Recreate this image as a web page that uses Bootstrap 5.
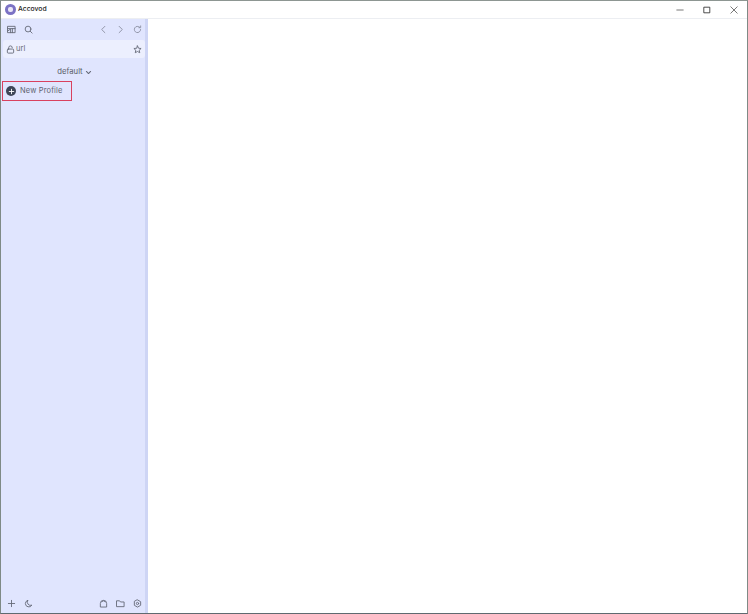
<!DOCTYPE html>
<html lang="en">
<head>
<meta charset="utf-8">
<title>Accovod</title>
<link href="https://cdn.jsdelivr.net/npm/bootstrap@5.3.0/dist/css/bootstrap.min.css" rel="stylesheet">
<style>
html,body{height:100%;margin:0;overflow:hidden;background:#fff}
.win-frame{width:748px;height:614px;border:1px solid #7f8a86;border-top-color:#8d9692;border-bottom-color:#5f6a70;font-family:"Inter","Liberation Sans",sans-serif;color:#50535f}
.title-bar{height:18px;flex:none;font-size:6.8px;font-weight:500;color:#222;border-bottom:1px solid #eceef2}
.app-logo{width:11px;height:11px;border-radius:50%;background:#7b72c4;margin-left:4px;margin-right:2px}
.app-logo::after{content:"";width:5px;height:5px;background:#e9e7f7;border-radius:2px}
.win-btn{width:27px;height:17px}
.win-btn .ico{width:8px;height:8px}
.side-pane{width:147px;background:#e0e5fe;border-right:3px solid #ced5f5;font-size:7.5px}
.tool-row{height:20px;flex:none;padding:0 3px 0 6px}
.url-row{height:18px;flex:none;margin:1px 0 0 2px;padding:0 3px 0 3px;background:#eceffe;border-radius:3px;color:#6a6d78}
.group-label{margin-top:8px;padding-left:3px;height:12px;flex:none;font-size:7.7px;color:#5a5e6a;gap:2px}
.profile-box{margin:3px 0 0 1px;width:70px;height:20px;flex:none;border:1px solid #d9415f;padding-left:3px;font-size:7.5px;letter-spacing:.02em;color:#5f6370;gap:4px}
.plus-dot{width:10px;height:10px;border-radius:50%;background:#3e4658}
.foot-row{height:20px;padding:0 3px 0 6px;margin-top:auto}
.ico{width:9px;height:9px;display:block;fill:none;stroke:#656a78;stroke-width:1;stroke-linecap:round;stroke-linejoin:round}
.ico-dim{stroke:#8a8fa0}
.ico-tiny{width:7px;height:7px}
.url-text{margin-left:1px}
.canvas-pane{background:#fff}
.tool-gap{gap:8px}
</style>
</head>
<body>
<div class="win-frame d-flex flex-column">
  <div class="title-bar d-flex align-items-center">
    <span class="app-logo d-flex align-items-center justify-content-center"></span>
    <span>Accovod</span>
    <div class="ms-auto d-flex">
      <span class="win-btn d-flex align-items-center justify-content-center"><svg class="ico" viewBox="0 0 10 10"><path d="M1 5h8" stroke="#555"/></svg></span>
      <span class="win-btn d-flex align-items-center justify-content-center"><svg class="ico" viewBox="0 0 10 10"><path d="M1.500 1.500h7v7h-7z" stroke="#222"/></svg></span>
      <span class="win-btn d-flex align-items-center justify-content-center"><svg class="ico" viewBox="0 0 10 10"><path d="M1 1l8 8M9 1l-8 8" stroke="#555"/></svg></span>
    </div>
  </div>
  <div class="d-flex flex-grow-1">
    <aside class="side-pane d-flex flex-column">
      <div class="tool-row d-flex align-items-center">
        <div class="d-flex tool-gap">
          <svg class="ico" viewBox="0 0 10 10"><path d="M1 1.500h8v7H1zM1 4h8M6 4v4.500M1 6.500l3-2v4"/></svg>
          <svg class="ico" viewBox="0 0 10 10"><circle cx="4.500" cy="4.500" r="3.200"/><path d="M7 7l2 2"/></svg>
        </div>
        <div class="ms-auto d-flex tool-gap">
          <svg class="ico ico-dim" viewBox="0 0 10 10"><path d="M6.500 1.500L3 5l3.500 3.500"/></svg>
          <svg class="ico ico-dim" viewBox="0 0 10 10"><path d="M3.500 1.500L7 5 3.500 8.500"/></svg>
          <svg class="ico ico-dim" viewBox="0 0 10 10"><path d="M8.500 5a3.500 3.500 0 1 1-1-2.500M8.500 1v2h-2"/></svg>
        </div>
      </div>
      <div class="url-row d-flex align-items-center">
        <svg class="ico" viewBox="0 0 10 10"><rect x="1.500" y="4.500" width="7" height="4.500" rx="1"/><path d="M3 4.500V3a2 2 0 0 1 4 0"/></svg>
        <span class="url-text">url</span>
        <svg class="ico ms-auto" viewBox="0 0 10 10"><path d="M5 1l1.200 2.600 2.800.3-2.100 1.900.6 2.800L5 7.200 2.500 8.600l.6-2.800L1 3.900l2.800-.3z"/></svg>
      </div>
      <div class="group-label d-flex align-items-center justify-content-center">
        <span>default</span>
        <svg class="ico ico-tiny" viewBox="0 0 10 10"><path d="M2 3.500L5 6.500 8 3.500" stroke-width="1.500"/></svg>
      </div>
      <div class="profile-box d-flex align-items-center">
        <span class="plus-dot d-flex align-items-center justify-content-center"><svg class="ico" viewBox="0 0 10 10"><path d="M5 2.500v5M2.500 5h5" stroke="#fff"/></svg></span>
        <span>New Profile</span>
      </div>
      <div class="foot-row d-flex align-items-center">
        <div class="d-flex tool-gap">
          <svg class="ico" viewBox="0 0 10 10"><path d="M5 1.500v7M1.500 5h7"/></svg>
          <svg class="ico" viewBox="0 0 10 10"><path d="M4 1.500a3.800 3.800 0 0 0 4.800 5.300A3.900 3.900 0 0 1 1.500 5 3.800 3.800 0 0 1 4 1.500z"/></svg>
        </div>
        <div class="ms-auto d-flex tool-gap">
          <svg class="ico" viewBox="0 0 10 10"><path d="M1.500 8.500V5a3.500 3.500 0 0 1 7 0v3.500zM3 3l2-1 2 1"/></svg>
          <svg class="ico" viewBox="0 0 10 10"><path d="M1 2h3l1 1.300h4V8.500H1z"/></svg>
          <svg class="ico" viewBox="0 0 10 10"><path d="M5 1l3.500 2v4L5 9 1.500 7V3z"/><circle cx="5" cy="5" r="1.300"/></svg>
        </div>
      </div>
    </aside>
    <main class="canvas-pane flex-grow-1"></main>
  </div>
</div>
</body>
</html>
